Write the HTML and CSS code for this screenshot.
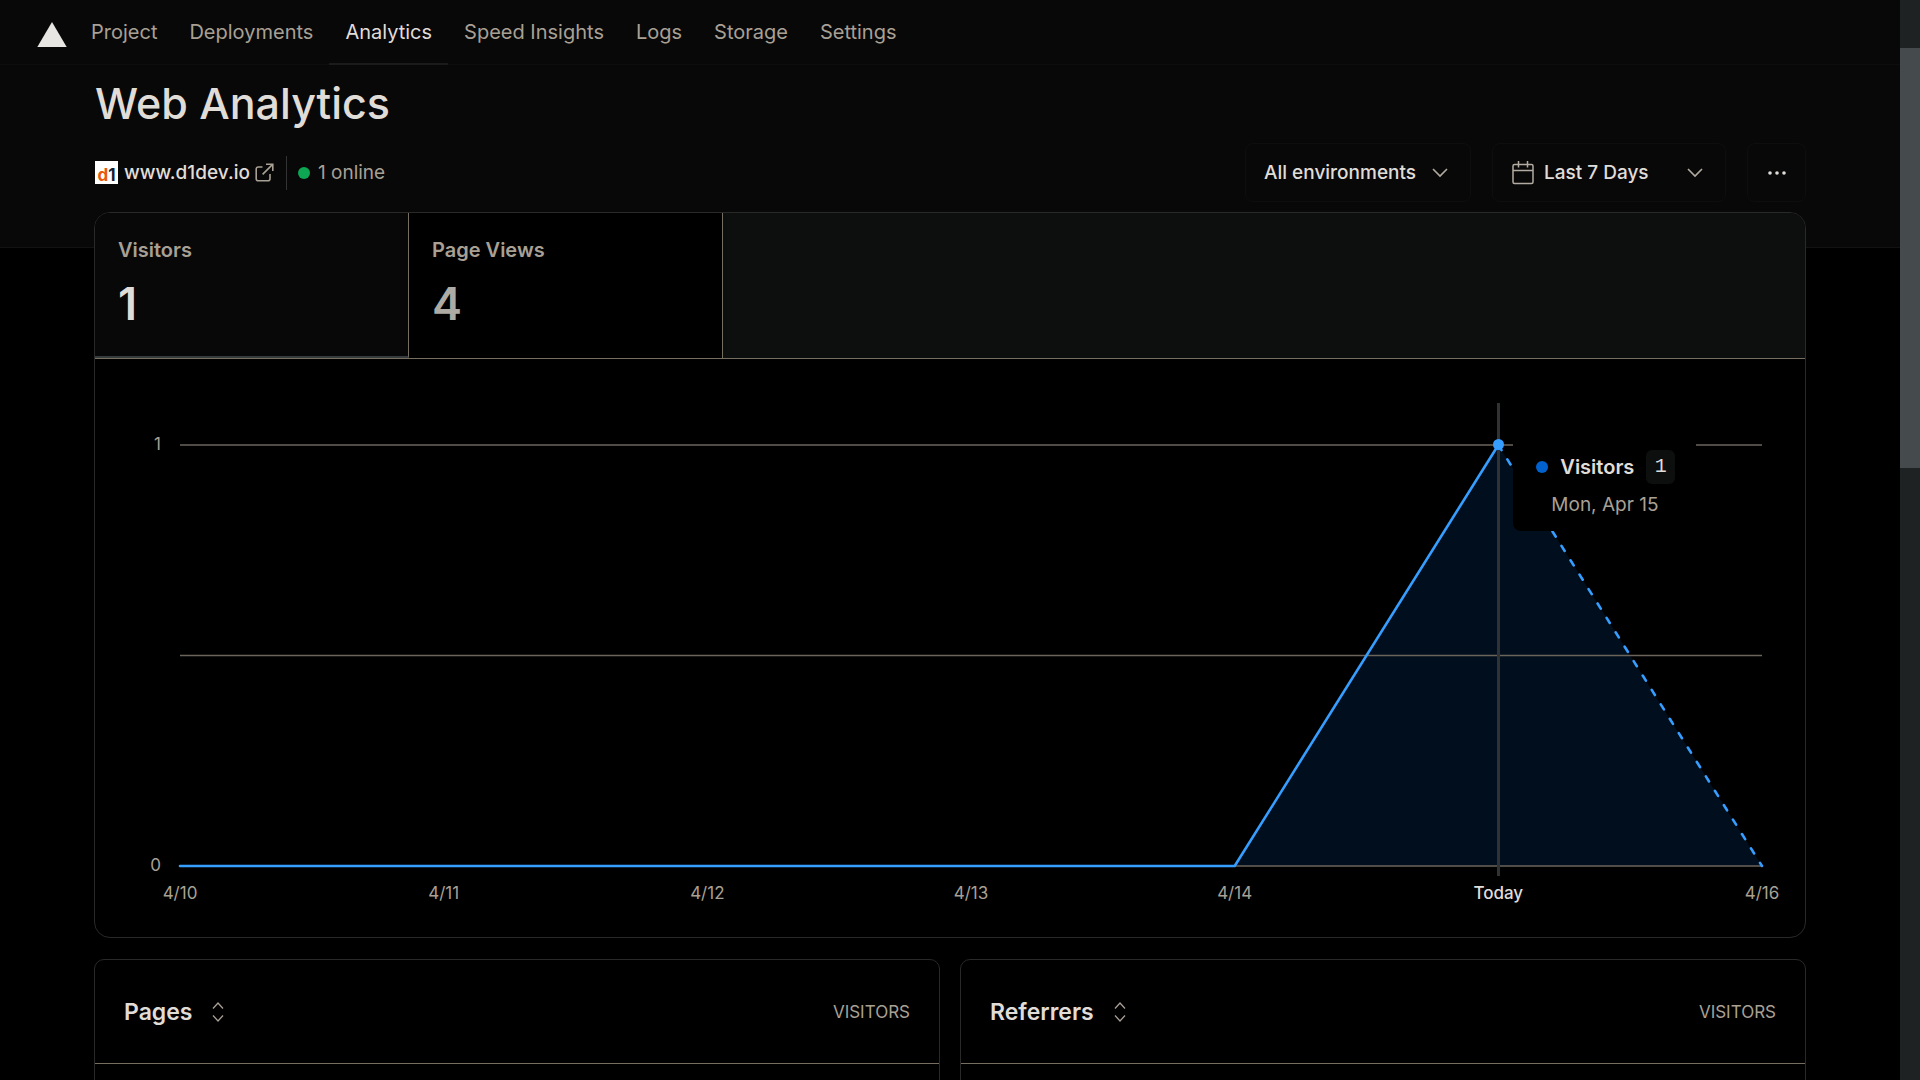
FILE: index.html
```
<!DOCTYPE html>
<html lang="en">
<head>
    <meta charset="UTF-8">
    <meta name="viewport" content="width=device-width, initial-scale=1.0">
    <title>Web Analytics</title>
    <link rel="stylesheet" href="styles.css">
</head>
<body>
    <div class="page">
        <header class="topbar">
            <a class="logo" href="#" aria-label="Home">
                <svg width="30" height="26" viewBox="0 0 30 26"><path d="M15 0L29.7 25H0.3z" fill="#e8e6e3"/></svg>
            </a>
            <nav class="nav">
                <a href="#">Project</a>
                <a href="#">Deployments</a>
                <a href="#" class="active">Analytics</a>
                <a href="#">Speed Insights</a>
                <a href="#">Logs</a>
                <a href="#">Storage</a>
                <a href="#">Settings</a>
            </nav>
        </header>

        <section class="hero">
            <h1>Web Analytics</h1>
            <div class="toolbar">
                <div class="site">
                    <span class="favicon"><span class="favicon-d">d</span>1</span>
                    <a class="site-link" href="#">www.d1dev.io
                        <svg width="19" height="19" viewBox="0 0 19 19" fill="none" stroke="#a8a095" stroke-width="1.6"><path d="M7.5 4H3.2A2 2 0 0 0 1.2 6v9.8a2 2 0 0 0 2 2H13a2 2 0 0 0 2-2V11M11 1.2h6.8V8M17.6 1.4L7.6 11.4"/></svg>
                    </a>
                    <span class="online"><i class="dot green"></i>1 online</span>
                </div>
                <div class="filters">
                    <button class="btn env">All environments
                        <svg class="chevron" width="16" height="10" viewBox="0 0 16 10"><path d="M1 1l7 7 7-7"/></svg>
                    </button>
                    <button class="btn range">
                        <svg width="22" height="24" viewBox="0 0 22 24" fill="none" stroke="#b2aba1" stroke-width="1.5"><rect x="1" y="3.5" width="20" height="19" rx="1.5"/><path d="M1 9.5h20M6.5 0v6.5M15.5 0v6.5"/></svg>
                        <span>Last 7 Days</span>
                        <svg class="chevron" width="16" height="10" viewBox="0 0 16 10"><path d="M1 1l7 7 7-7"/></svg>
                    </button>
                    <button class="btn more" aria-label="More">
                        <svg width="18" height="4" viewBox="0 0 18 4" fill="#e0ddd9"><circle cx="2" cy="2" r="1.8"/><circle cx="9" cy="2" r="1.8"/><circle cx="16" cy="2" r="1.8"/></svg>
                    </button>
                </div>
            </div>
        </section>

        <main class="content">
            <section class="card stats">
                <div class="tabs">
                    <button class="tab selected"><span class="tab-label">Visitors</span><span class="tab-value">1</span></button>
                    <button class="tab"><span class="tab-label">Page Views</span><span class="tab-value">4</span></button>
                </div>
                <div class="chart">
                    <div class="y-axis"><span>1</span><span>0</span></div>
                    <div class="plot">
                        <!-- x: one unit per day, y: 1 visitor at the top -->
                        <svg class="lines" viewBox="0 0 1200 400" preserveAspectRatio="none">
                            <path class="area" d="M800 400L1000 0L1200 400z"/>
                            <path class="grid" d="M0 0H1200M0 200H1200M0 400H1200"/>
                            <path class="line" d="M0 400H800L1000 0"/>
                            <path class="line dashed" d="M1000 0L1200 400"/>
                        </svg>
                        <div class="cursor"></div>
                        <div class="tooltip">
                            <div class="tooltip-row"><i class="dot blue"></i><b>Visitors</b><span class="count">1</span></div>
                            <div class="tooltip-date">Mon, Apr 15</div>
                        </div>
                    </div>
                    <div class="x-axis">
                        <span>4/10</span><span>4/11</span><span>4/12</span><span>4/13</span><span>4/14</span><span class="today">Today</span><span>4/16</span>
                    </div>
                </div>
            </section>

            <div class="panels">
                <section class="card panel">
                    <div class="panel-head">
                        <button class="panel-title">Pages
                            <svg width="12" height="20" viewBox="0 0 12 20"><path d="M1 6.5l5-5.5 5 5.5M1 13.5l5 5.5 5-5.5"/></svg>
                        </button>
                        <span>VISITORS</span>
                    </div>
                </section>
                <section class="card panel">
                    <div class="panel-head">
                        <button class="panel-title">Referrers
                            <svg width="12" height="20" viewBox="0 0 12 20"><path d="M1 6.5l5-5.5 5 5.5M1 13.5l5 5.5 5-5.5"/></svg>
                        </button>
                        <span>VISITORS</span>
                    </div>
                </section>
            </div>
        </main>
    </div>
    <div class="scrollbar"><div class="thumb"></div></div>
</body>
</html>
```
FILE: styles.css
```
* { box-sizing: border-box; }
body { margin: 0; display: flex; height: 100vh; overflow: hidden; background: #000; color: #e0ddd9; font-family: Inter, "Liberation Sans", sans-serif; font-size: 20px; line-height: 28px; }
a { color: inherit; text-decoration: none; }
button { font: inherit; color: inherit; background: none; border: none; padding: 0; text-align: left; cursor: pointer; }
svg { display: block; flex: none; }
.page { flex: 1; min-width: 0; }

/* Top navigation */
.topbar { display: flex; height: 65px; padding-left: 37px; background: #080808; border-bottom: 1px solid #0d0d0d; }
.logo { padding-top: 22px; margin-right: 8px; }
.nav { display: flex; }
.nav a { padding: 18px 16px 0; height: 65px; color: #a8a095; }
.nav a.active { color: #e0ddd9; border-bottom: 2px solid #1b1b1b; }

/* Title and filters */
.hero { height: 183px; padding: 10px 94px 0 95px; background: #080808; border-bottom: 1px solid #121212; }
.hero h1 { margin: 0; font-size: 43px; line-height: 56px; font-weight: 500; }
.toolbar { display: flex; justify-content: space-between; align-items: center; margin-top: 12px; font-size: 19px; }
.site { display: flex; align-items: center; }
.favicon { width: 23px; height: 23px; background: #fff; color: #14202e; font-size: 17px; line-height: 28px; font-weight: 700; text-align: center; }
.favicon-d { color: #e8590c; }
.site-link { display: flex; align-items: center; gap: 5px; margin-left: 6px; font-weight: 500; }
.online { display: flex; align-items: center; gap: 8px; height: 34px; margin-left: 12px; padding-left: 11px; border-left: 1px solid #333; color: #a8a095; }
.dot { width: 12px; height: 12px; border-radius: 50%; flex: none; }
.green { background: #0ea553; }
.blue { background: #0061cf; }
.filters { display: flex; gap: 21px; }
.btn { display: flex; align-items: center; height: 59px; border: 1px solid #0e0e0e; border-radius: 8px; font-weight: 500; }
.chevron { fill: none; stroke: #b2aba1; stroke-width: 1.6; }
.env { width: 226px; padding: 0 22px 0 18px; justify-content: space-between; }
.range { width: 234px; padding: 0 22px 0 19px; gap: 10px; }
.range .chevron { margin-left: auto; }
.more { width: 59px; justify-content: center; }

/* Main card overlaps the lighter background */
.content { position: relative; margin-top: -36px; padding: 0 94px; }
.card { border: 1px solid #292929; background: #000; }
.stats { border-radius: 16px; overflow: hidden; }
.tabs { display: flex; height: 146px; background: #0d0f0e; border-bottom: 1px solid #776e62; }
.tab { width: 314px; padding: 23px 23px 0; background: #000; border-right: 1px solid #776e62; color: #aeaaa4; }
.tab { display: flex; flex-direction: column; }
.tab.selected { background: #080808; color: #e0ddd9; border-bottom: 2px solid #363b3d; }
.tab-label { color: #a8a095; font-weight: 600; }
.tab-value { margin-top: 16px; font-size: 45px; line-height: 48px; font-weight: 600; }

/* Chart */
.chart { display: grid; grid-template-columns: 66px 1fr; column-gap: 19px; padding: 86px 43px 32px 0; font-size: 17px; line-height: 24px; color: #a8a095; }
.y-axis { display: flex; flex-direction: column; justify-content: space-between; align-items: flex-end; margin: -13px 0 -11px; }
.plot { position: relative; height: 421px; }
.lines { width: 100%; height: 100%; overflow: visible; }
.lines path { vector-effect: non-scaling-stroke; fill: none; }
.lines .area { fill: #000e1d; }
.lines .grid { stroke: #6b645b; stroke-width: 1.4; }
.lines .line { stroke: #369eff; stroke-width: 2.6; stroke-linecap: round; stroke-linejoin: round; }
.lines .dashed { stroke-dasharray: 6 11; }
.cursor { position: absolute; left: 83.333%; top: -42px; bottom: -10px; width: 3px; margin-left: -1px; background: #303336; }
.cursor::after { content: ""; position: absolute; left: -4px; top: 36px; width: 11px; height: 11px; border-radius: 50%; background: #369eff; }
.tooltip { position: absolute; left: 83.333%; top: -14px; width: 183px; height: 100px; margin-left: 15px; padding: 19px 0 0 23px; background: #000; border-radius: 8px; font-size: 19px; line-height: 28px; }
.tooltip-row { display: flex; align-items: center; gap: 12px; height: 34px; color: #e0ddd9; font-size: 20px; }
.tooltip-row b { font-weight: 600; }
.count { width: 29px; height: 34px; border-radius: 6px; background: #0d0f0e; font-family: "Liberation Mono", monospace; line-height: 34px; text-align: center; }
.tooltip-date { margin-top: 7px; padding-left: 15px; }
.x-axis { grid-column: 2; display: flex; justify-content: space-between; padding-top: 15px; }
.x-axis span { width: 0; display: flex; justify-content: center; }
.x-axis .today { color: #e0ddd9; font-weight: 500; }

/* Bottom panels */
.panels { display: grid; grid-template-columns: 1fr 1fr; gap: 20px; margin-top: 21px; }
.panel { height: 400px; border-radius: 10px; }
.panel-head { display: flex; justify-content: space-between; align-items: center; height: 104px; padding: 0 29px; border-bottom: 1px solid #776e62; font-size: 17px; color: #a8a095; }
.panel-title { display: flex; align-items: center; gap: 20px; font-size: 23px; font-weight: 600; color: #e0ddd9; }
.panel-title svg { fill: none; stroke: #a8a095; stroke-width: 1.3; }

/* Page scrollbar */
.scrollbar { width: 20px; padding-top: 48px; background: #1f2223; }
.thumb { height: 420px; background: #454a4d; }
```
